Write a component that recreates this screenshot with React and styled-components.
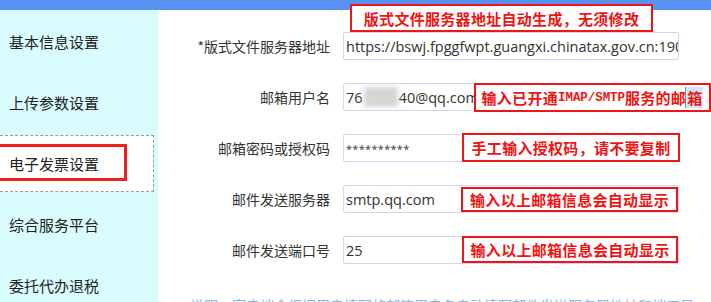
import React from "react";
import styled, { createGlobalStyle } from "styled-components";

const GlobalStyle = createGlobalStyle`
  html, body {
    margin: 0;
    padding: 0;
    background: #fff;
    overflow: hidden;
  }
  body {
    font-family: "Noto Sans CJK SC", "Noto Sans", sans-serif;
  }
`;

const TopBar = styled.div`
  height: 10px;
  background: #5893f4;
`;

const Body = styled.div`
  display: flex;
  align-items: flex-start;
`;

const Sidebar = styled.div`
  width: 158px;
  flex: none;
  background: #d9fdfe;
  padding-top: 1px;
  height: 400px;
`;

const MenuItem = styled.div`
  position: relative;
  display: flex;
  align-items: center;
  box-sizing: border-box;
  height: ${(p) => (p.active ? "57px" : "61px")};
  margin: ${(p) => (p.active ? "2px 4px 2px 0" : "0")};
  padding-left: 9px;
  font-size: 15px;
  color: #222;
  background: ${(p) => (p.active ? "#fff" : "transparent")};
  border: ${(p) => (p.active ? "1px dashed #9a9a9a" : "none")};
  border-left: none;
  line-height: 1;
`;

const RedFrame = styled.span`
  position: absolute;
  left: 0;
  top: 8px;
  width: 127px;
  height: 37px;
  box-sizing: border-box;
  border: 3px solid #f21d1d;
  border-left: none;
`;

const Main = styled.div`
  flex: 1;
  padding-top: 22px;
  display: flex;
  flex-direction: column;
  gap: 23px;
`;

const Row = styled.div`
  position: relative;
  display: grid;
  grid-template-columns: 172px 336px;
  column-gap: 13px;
  align-items: center;
  height: 28px;
`;

const Label = styled.label`
  text-align: right;
  font-size: 14px;
  color: #333;
  white-space: nowrap;
`;

const Field = styled.div`
  box-sizing: border-box;
  height: 28px;
  border: 1px solid #d3d5f4;
  border-radius: 2px;
  display: flex;
  align-items: center;
  padding-left: 2px;
  overflow: hidden;
  white-space: nowrap;
  font-family: "Open Sans", "Noto Sans", sans-serif;
  font-size: ${(p) => (p.small ? "11px" : "14.5px")};
  color: #333;
  letter-spacing: ${(p) => (p.small ? "0.3px" : "0")};
`;

const Blur = styled.span`
  display: inline-block;
  width: 34px;
  height: 20px;
  margin: 0 1px;
  background: #d6d6d6;
  filter: blur(2.5px);
`;

const Note = styled.div`
  position: absolute;
  left: ${(p) => p.x}px;
  top: ${(p) => p.y}px;
  width: ${(p) => p.w}px;
  height: ${(p) => p.h}px;
  box-sizing: border-box;
  border: 2px solid #f01515;
  background: #fff;
  display: flex;
  align-items: center;
  justify-content: center;
  white-space: nowrap;
  color: #ee1414;
  font-weight: 700;
  font-size: 15px;
  letter-spacing: 0.3px;
`;

const Mono = styled.span`
  font-family: "Liberation Mono", monospace;
  font-weight: 700;
  font-size: 12.4px;
  letter-spacing: 0;
`;

const Picked = styled.span`
  background: #d7e3f6;
  box-shadow: -1px 0 0 #8c8c8c;
  padding: 0 1px;
`;

const Hint = styled.div`
  margin-top: 8px;
  padding-left: 32px;
  font-size: 14px;
  color: #8fb1de;
  white-space: nowrap;
`;

const menu = ["基本信息设置", "上传参数设置", "电子发票设置", "综合服务平台", "委托代办退税"];

export default function App() {
  return (
    <>
      <GlobalStyle />
      <TopBar />
      <Body>
        <Sidebar>
          {menu.map((m) => (
            <MenuItem key={m} active={m === "电子发票设置"}>
              {m}
              {m === "电子发票设置" && <RedFrame />}
            </MenuItem>
          ))}
        </Sidebar>
        <Main>
          <Row>
            <Label>*版式文件服务器地址</Label>
            <Field>https://bswj.fpggfwpt.guangxi.chinatax.gov.cn:190</Field>
            <Note x={192} y={-28} w={303} h={28}>
              版式文件服务器地址自动生成，无须修改
            </Note>
          </Row>
          <Row>
            <Label>邮箱用户名</Label>
            <Field>
              76<Blur />40@qq.com
            </Field>
            <Note x={316} y={0} w={237} h={29}>
              输入已开通<Mono>IMAP/SMTP</Mono>服务的邮<Picked>箱</Picked>
            </Note>
          </Row>
          <Row>
            <Label>邮箱密码或授权码</Label>
            <Field small>**********</Field>
            <Note x={304} y={-1} w={218} h={29}>
              手工输入授权码，请不要复制
            </Note>
          </Row>
          <Row>
            <Label>邮件发送服务器</Label>
            <Field>smtp.qq.com</Field>
            <Note x={303} y={2} w={217} h={25}>
              输入以上邮箱信息会自动显示
            </Note>
          </Row>
          <Row>
            <Label>邮件发送端口号</Label>
            <Field>25</Field>
            <Note x={304} y={0} w={216} h={27}>
              输入以上邮箱信息会自动显示
            </Note>
          </Row>
          <Hint>说明：客户端会根据用户填写的邮箱用户名自动填写邮件发送服务器地址和端口号</Hint>
        </Main>
      </Body>
    </>
  );
}
